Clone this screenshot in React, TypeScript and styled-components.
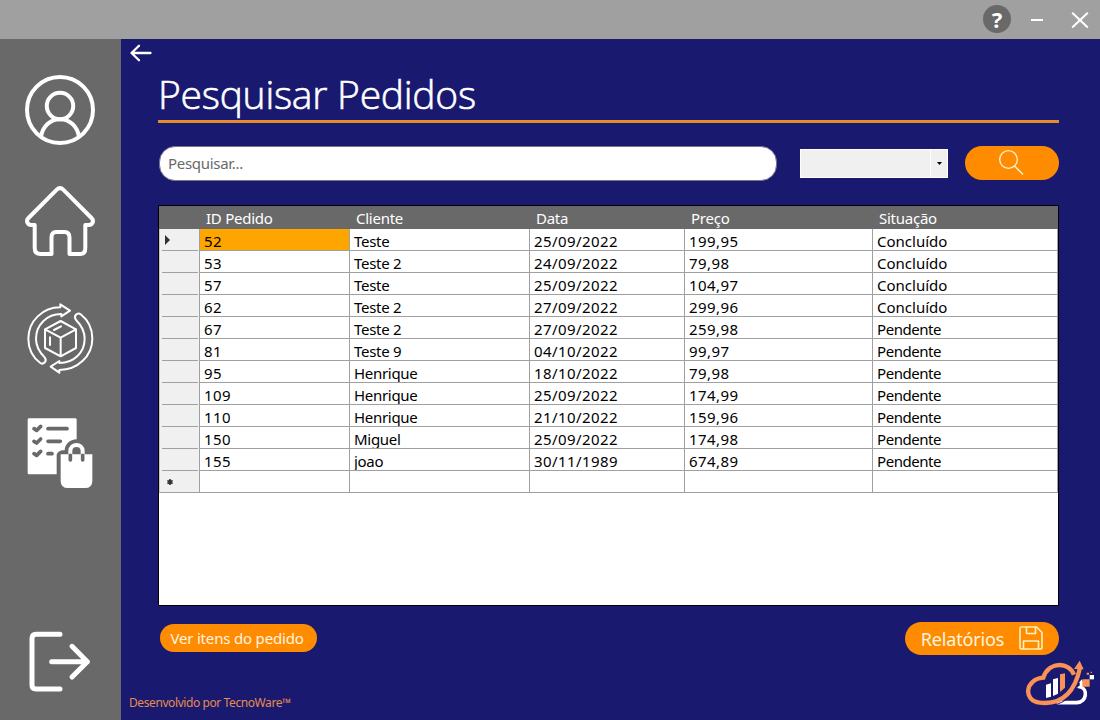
import React from "react";
import styled, { createGlobalStyle } from "styled-components";

const GlobalStyle = createGlobalStyle`
  * { box-sizing: border-box; }
  body { margin: 0; background: #191970; font-family: "Noto Sans", "Open Sans", sans-serif; }
  button, input { font-family: inherit; }
`;

const Window = styled.div`
  width: 1100px;
  height: 720px;
  display: flex;
  flex-direction: column;
  overflow: hidden;
`;

const TitleBar = styled.header`
  height: 39px;
  flex: none;
  background: #a0a0a0;
  display: flex;
  justify-content: flex-end;
  align-items: center;
  padding-right: 11px;
`;

const HelpBadge = styled.button`
  width: 28px;
  height: 28px;
  margin: 0 20px 1px 0;
  padding: 0;
  border: 0;
  border-radius: 50%;
  background: #696969;
  color: #fff;
  font-size: 22px;
  font-weight: 700;
  line-height: 27px;
  text-align: center;
`;

const Minimize = styled.span`
  width: 12px;
  height: 2px;
  margin: 1px 28px 0 0;
  background: #fff;
`;

const Body = styled.div`
  flex: 1;
  display: flex;
  min-height: 0;
`;

const Sidebar = styled.nav`
  width: 121px;
  flex: none;
  background: #696969;
  display: flex;
  flex-direction: column;
  align-items: center;
  padding: 36px 1px 27px 0;
`;

const NavItem = styled.a<{ $gap?: number; $last?: boolean }>`
  display: block;
  line-height: 0;
  margin-top: ${(p) => (p.$last ? "auto" : `${p.$gap ?? 0}px`)};
`;

const Main = styled.main`
  flex: 1;
  display: flex;
  flex-direction: column;
  background: #191970;
  padding: 5px 41px 0 37px;
`;

const BackLink = styled.a`
  height: 18px;
  margin-left: -29px;
  line-height: 0;
`;

const Title = styled.h1`
  height: 61px;
  margin: 0;
  border-bottom: 3px solid #e68c2d;
  color: #fff;
  font-family: "Open Sans", "Noto Sans", sans-serif;
  font-size: 39px;
  font-weight: 300;
  -webkit-text-stroke: 0.6px #fff;
  line-height: 64px;
  letter-spacing: -0.25px;
  white-space: nowrap;
`;

const SearchRow = styled.div`
  display: flex;
  align-items: flex-start;
  height: 35px;
  margin: 23px 0 24px;
  padding-left: 1px;
`;

const SearchInput = styled.input`
  width: 618px;
  height: 35px;
  padding: 0 8px 1px;
  border: 1px solid #74748c;
  border-radius: 16px;
  background: #fff;
  font-size: 15px;
  letter-spacing: -0.3px;
  outline: 0;
  &::placeholder { color: #696969; opacity: 1; }
`;

const Combo = styled.div`
  width: 148px;
  height: 29px;
  margin: 3px 17px 0 23px;
  display: flex;
  border: 1px solid #fff;
  background: #f0f0f0;
`;

const ComboArrow = styled.span`
  width: 17px;
  margin-left: auto;
  border-left: 1px solid #fff;
  display: flex;
  align-items: center;
  justify-content: center;
`;

const PillButton = styled.button<{ $w: number; $h: number; $size?: number; $spacing?: number; $right?: number }>`
  width: ${(p) => p.$w}px;
  height: ${(p) => p.$h}px;
  padding: 0 ${(p) => p.$right ?? 3}px 0 0;
  display: flex;
  align-items: center;
  justify-content: center;
  border: 0;
  border-radius: 17px;
  background: #ff8c00;
  color: #fff5e0;
  font-size: ${(p) => p.$size ?? 15}px;
  letter-spacing: ${(p) => p.$spacing ?? 0}px;
  white-space: nowrap;
`;

const Grid = styled.div`
  width: 901px;
  height: 401px;
  border: 1px solid #000;
  background: #fff;
`;

const columns = "41px 150px 180px 155px 188px 185px";

const HeaderRow = styled.div`
  display: grid;
  grid-template-columns: ${columns};
  height: 23px;
  background: #696969;
  color: #fff;
  font-size: 15px;
  line-height: 24px;
`;

const HeaderCell = styled.span`
  padding-left: 6px;
  letter-spacing: -0.25px;
`;

const DataRow = styled.div`
  display: grid;
  grid-template-columns: ${columns};
  height: 22px;
`;

const RowHead = styled.span<{ $last?: boolean }>`
  display: flex;
  align-items: center;
  padding-left: 5px;
  background: ${(p) =>
    p.$last ? "#f0f0f0" : "linear-gradient(#a0a0a0, #a0a0a0) 2px 21px / 36px 1px no-repeat #f0f0f0"};
  border-left: 1px solid #c8c8c8;
  border-right: 1px solid #a0a0a0;
  border-bottom: ${(p) => (p.$last ? "1px solid #a0a0a0" : "0")};
`;

const Cell = styled.span<{ $selected?: boolean; $spacing?: number }>`
  padding-left: 4px;
  overflow: hidden;
  border-right: 1px solid #a0a0a0;
  border-bottom: 1px solid #a0a0a0;
  background: ${(p) => (p.$selected ? "#ffa500" : "#fff")};
  color: #000;
  font-size: 15px;
  line-height: 24px;
  letter-spacing: ${(p) => p.$spacing ?? 0.42}px;
  white-space: nowrap;
`;

const Actions = styled.div`
  display: flex;
  justify-content: space-between;
  align-items: flex-start;
  margin-top: 16px;
  height: 33px;
  padding-left: 2px;
`;

const ActionSlot = styled.div<{ $top?: number }>`
  padding-top: ${(p) => p.$top ?? 0}px;
`;

const ReportIcon = styled.span`
  line-height: 0;
  margin: -2px 0 0 15px;
`;

const Footer = styled.footer`
  display: flex;
  justify-content: space-between;
  align-items: flex-start;
  margin: 5px -36px 0 -29px;
`;

const Credit = styled.span`
  margin-top: 34px;
  color: #e68c4d;
  font-size: 12px;
  line-height: 17px;
  letter-spacing: -0.41px;
`;

const CloseIcon = () => (
  <svg width="18" height="18" viewBox="0 0 18 18" stroke="#fff" strokeWidth="2">
    <path d="M1.2 1.700 16.800 16.500M16.800 1.700 1.200 16.500" />
  </svg>
);

const UserIcon = () => (
  <svg width="70" height="70" viewBox="0 0 70 70" fill="none" stroke="#fff" strokeWidth="4">
    <circle cx="35" cy="35" r="33" />
    <circle cx="35" cy="31" r="13.2" />
    <path d="M16 62C17.5 51 25.5 44.2 35 44.2S52.500 51 54 62" />
  </svg>
);

const HomeIcon = () => (
  <svg width="70" height="71" viewBox="0 0 70 71" fill="none" stroke="#fff" strokeWidth="4" strokeLinejoin="round">
    <path d="M9.700 39H6.500C2.500 39 .6 35 3.500 32L31.500 3.900Q35 .5 38.500 3.900L66.500 32C69.400 35 67.500 39 63.500 39H60.300V62Q60.300 68 55.300 68H44.500V51.500Q44.500 46 39.500 46H31Q26.500 46 26.500 51.500V68H15.500Q9.700 68 9.700 62Z" />
  </svg>
);

const OrdersIcon = () => (
  <svg width="67" height="72" viewBox="80 40 201 216" fill="none" stroke="#fff" strokeWidth="6" strokeLinejoin="round" strokeLinecap="round">
    <path d="M180 53V44L209 63L183 80V73C139 73 107 106 107 147C107 170 117 187 133 203C142 214 129 226 120 220C96 202 84 177 84 147C84 94 127 53 180 53Z" />
    <path d="M177 241V249L151 231L177 214V220C221 220 253 188 253 147C253 124 243 107 227 91C218 79 231 67 241 74C264 92 276 117 276 147C276 199 232 241 177 241Z" />
    <path d="M181 94 227 119V175L181 200 134 175V119ZM134 119 181 144 227 119M181 144V200" />
    <path d="M161 121 182 110M149 143V166" />
  </svg>
);

const ChecklistIcon = () => (
  <svg width="67" height="71" viewBox="80 383 201 213">
    <path d="M86 384H225Q229 384 229 388V447C208 447 194 462 193 480C178 480 169 486 169 496V552H86Q82 552 82 548V388Q82 384 86 384Z" fill="#fff" />
    <g fill="none" stroke="#696969" strokeLinecap="round" strokeLinejoin="round">
      <path d="M101 415 109 420 121 408M101 453 109 458 121 446M101 490 109 495 121 483" strokeWidth="11" />
      <path d="M143 415H200M143 453H180M143 490H155" strokeWidth="11" />
    </g>
    <path d="M181 492H276V571Q276 593 254 593H203Q181 593 181 571Z" fill="#fff" />
    <path d="M210 492V482C210 458 247 458 247 482V492" fill="none" stroke="#fff" strokeWidth="12" />
    <path d="M210 495V509M247 495V509" stroke="#696969" strokeWidth="11" strokeLinecap="round" />
  </svg>
);

const LogoutIcon = () => (
  <svg width="62" height="62" viewBox="88 94 186 186" fill="none" stroke="#fff" strokeWidth="15" strokeLinecap="round" strokeLinejoin="round">
    <path d="M181 104H109Q97 104 97 116V256Q97 268 109 268H181" />
    <path d="M156 186H263M217 140 263 186 217 232" />
  </svg>
);

const BackIcon = () => (
  <svg width="24" height="18" viewBox="0 0 24 18" fill="none" stroke="#fff" strokeWidth="2.300" strokeLinecap="round" strokeLinejoin="round">
    <path d="M21.500 9H2.500M10 1.700 2.500 9 10 16.300" />
  </svg>
);

const SearchIcon = () => (
  <svg width="26" height="26" viewBox="0 0 26 26" fill="none" stroke="#fff1d6" strokeWidth="1.300">
    <circle cx="10.500" cy="9.500" r="8.800" />
    <path d="M16.500 16 25 24.500" />
  </svg>
);

const SaveIcon = () => (
  <svg width="24" height="24" viewBox="0 0 24 24" fill="none" stroke="#fff1c0" strokeWidth="1.600" strokeLinejoin="round">
    <path d="M2.500 1H17.500L23 6.500V21.500Q23 23 21.500 23H2.500Q1 23 1 21.500V2.500Q1 1 2.500 1Z" />
    <path d="M7.500 1V7.500H16.500V1M4.500 23V15H19.500V23" />
  </svg>
);

const Logo = () => (
  <svg width="69" height="46" viewBox="438 178 207 138" fill="none">
    <path d="M601 241C607 246 605 257 602 259C622 264 623 304 590 306H530" stroke="#fff" strokeWidth="11" />
    <path d="M498 252 513 248V288L498 292ZM519 236 534 232V279L519 286Z" fill="#fff" />
    <path d="M540 221 555 218V261L540 274Z" fill="#fa9156" />
    <path d="M582 222C568 183 506 181 490 231C435 235 428 300 479 306C544 313 584 278 600 201" stroke="#fa9156" strokeWidth="13" />
    <path d="M520 314C557 305 584 281 597 248" stroke="#191970" strokeWidth="3" />
    <path d="M582 205 599 180 611 206ZM607 236H629V258H607ZM620 216H627V222H620ZM632 213H636V217H632Z" fill="#fa9156" />
    <path d="M629 223H642V236H629Z" fill="#fff" />
  </svg>
);

const rows = [
  ["52", "Teste", "25/09/2022", "199,95", "Concluído"],
  ["53", "Teste 2", "24/09/2022", "79,98", "Concluído"],
  ["57", "Teste", "25/09/2022", "104,97", "Concluído"],
  ["62", "Teste 2", "27/09/2022", "299,96", "Concluído"],
  ["67", "Teste 2", "27/09/2022", "259,98", "Pendente"],
  ["81", "Teste 9", "04/10/2022", "99,97", "Pendente"],
  ["95", "Henrique", "18/10/2022", "79,98", "Pendente"],
  ["109", "Henrique", "25/09/2022", "174,99", "Pendente"],
  ["110", "Henrique", "21/10/2022", "159,96", "Pendente"],
  ["150", "Miguel", "25/09/2022", "174,98", "Pendente"],
  ["155", "joao", "30/11/1989", "674,89", "Pendente"],
];

export default function App() {
  return (
    <Window>
      <GlobalStyle />
      <TitleBar>
        <HelpBadge>?</HelpBadge>
        <Minimize />
        <CloseIcon />
      </TitleBar>
      <Body>
        <Sidebar>
          <NavItem><UserIcon /></NavItem>
          <NavItem $gap={41}><HomeIcon /></NavItem>
          <NavItem $gap={46}><OrdersIcon /></NavItem>
          <NavItem $gap={43}><ChecklistIcon /></NavItem>
          <NavItem $last><LogoutIcon /></NavItem>
        </Sidebar>
        <Main>
          <BackLink><BackIcon /></BackLink>
          <Title>Pesquisar Pedidos</Title>
          <SearchRow>
            <SearchInput placeholder="Pesquisar..." />
            <Combo>
              <ComboArrow>
                <svg width="5" height="3" viewBox="0 0 5 3"><path d="M0 0H5L2.500 3Z" /></svg>
              </ComboArrow>
            </Combo>
            <PillButton $w={94} $h={34} $right={2}><SearchIcon /></PillButton>
          </SearchRow>
          <Grid>
            <HeaderRow>
              <span />
              {["ID Pedido", "Cliente", "Data", "Preço", "Situação"].map((h) => (
                <HeaderCell key={h}>{h}</HeaderCell>
              ))}
            </HeaderRow>
            {rows.map(([id, client, date, price, status], i) => (
              <DataRow key={id}>
                <RowHead>
                  {i === 0 && (
                    <svg width="5" height="10" viewBox="0 0 5 10"><path d="M0 0 5 5 0 10Z" fill="#333" /></svg>
                  )}
                </RowHead>
                <Cell $selected={i === 0}>{id}</Cell>
                <Cell $spacing={-0.3}>{client}</Cell>
                <Cell>{date}</Cell>
                <Cell>{price}</Cell>
                <Cell $spacing={status === "Pendente" ? -0.45 : 0}>{status}</Cell>
              </DataRow>
            ))}
            <DataRow>
              <RowHead $last>
                <svg width="10" height="8" viewBox="0 0 10 8" stroke="#333" strokeWidth="1.600">
                  <path d="M5 1V7M2.400 2.500 7.600 5.500M7.600 2.500 2.400 5.500" />
                </svg>
              </RowHead>
              <Cell /><Cell /><Cell /><Cell /><Cell />
            </DataRow>
          </Grid>
          <Actions>
            <ActionSlot $top={2}>
              <PillButton $w={157} $h={28} $spacing={-0.18}>Ver itens do pedido</PillButton>
            </ActionSlot>
            <ActionSlot>
              <PillButton $w={154} $h={33} $size={18} $spacing={-0.15} $right={0}>
                Relatórios
                <ReportIcon><SaveIcon /></ReportIcon>
              </PillButton>
            </ActionSlot>
          </Actions>
          <Footer>
            <Credit>Desenvolvido por TecnoWare™</Credit>
            <Logo />
          </Footer>
        </Main>
      </Body>
    </Window>
  );
}
